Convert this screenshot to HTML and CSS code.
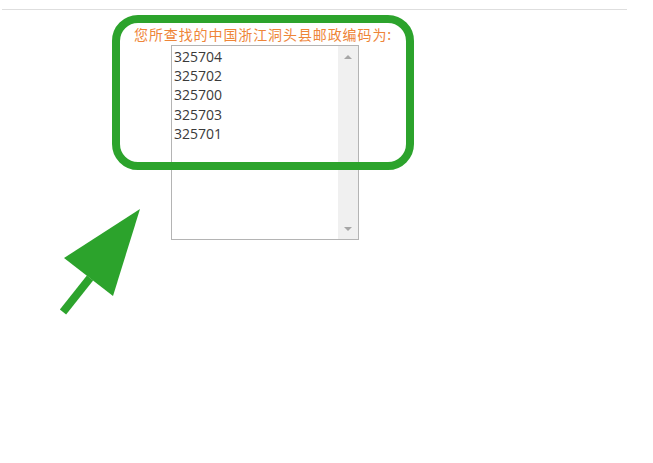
FILE: index.html
```html
<!DOCTYPE html>
<html lang="zh-CN">
<head>
<meta charset="utf-8">
<title>邮政编码</title>
<link rel="stylesheet" href="styles.css">
</head>
<body>
<div class="page">
  <div class="rule"></div>
  <div class="result">
    <div class="label">您所查找的中国浙江洞头县邮政编码为:</div>
    <div class="listbox">
      <ul class="items">
        <li>325704</li>
        <li>325702</li>
        <li>325700</li>
        <li>325703</li>
        <li>325701</li>
      </ul>
      <div class="scrollbar">
        <span class="arrow up"></span>
        <span class="arrow down"></span>
      </div>
    </div>
  </div>
  <div class="highlight"></div>
  <svg class="pointer" width="160" height="330" viewBox="0 0 160 330" xmlns="http://www.w3.org/2000/svg">
    <line x1="90" y1="278" x2="63" y2="312" stroke="#2ca32c" stroke-width="8"/>
    <polygon points="140,209 64,258 113,296" fill="#2ca32c"/>
  </svg>
</div>
</body>
</html>
```

FILE: styles.css
```css
html, body {
  margin: 0;
  padding: 0;
  background: #ffffff;
}

.page {
  position: relative;
  width: 653px;
  height: 463px;
  overflow: hidden;
  font-family: "Open Sans", "Noto Sans CJK SC", sans-serif;
}

.rule {
  margin: 9px 0 0 2px;
  width: 625px;
  height: 1px;
  background: #dedede;
}

.result {
  display: flex;
  flex-direction: column;
  padding-top: 14px;
}

.label {
  margin-left: 134px;
  font-family: "Noto Sans CJK SC", sans-serif;
  font-size: 14px;
  line-height: 20px;
  color: #ee8538;
  letter-spacing: 0.9px;
  white-space: nowrap;
}

.listbox {
  margin-left: 171px;
  margin-top: 1px;
  width: 186px;
  height: 193px;
  border: 1px solid #b4b4b4;
  display: flex;
  background: #fff;
}

.items {
  flex: 1;
  list-style: none;
  margin: 0;
  padding: 1px 0 0 2px;
  font-family: "Open Sans", sans-serif;
  font-size: 14px;
  line-height: 19.2px;
  color: #3a3a3a;
}

.scrollbar {
  width: 20px;
  background: #f0f0f0;
  display: flex;
  flex-direction: column;
  justify-content: space-between;
  align-items: center;
  padding: 9px 0 8px;
}

.arrow {
  width: 0;
  height: 0;
  border-left: 4px solid transparent;
  border-right: 4px solid transparent;
}

.arrow.up {
  border-bottom: 4px solid #a6a6a6;
}

.arrow.down {
  border-top: 4px solid #a6a6a6;
}

.highlight {
  position: absolute;
  left: 112px;
  top: 15px;
  width: 286px;
  height: 139px;
  border: 8px solid #2ca32c;
  border-radius: 26px;
}

.pointer {
  position: absolute;
  left: 0;
  top: 0;
}
```
